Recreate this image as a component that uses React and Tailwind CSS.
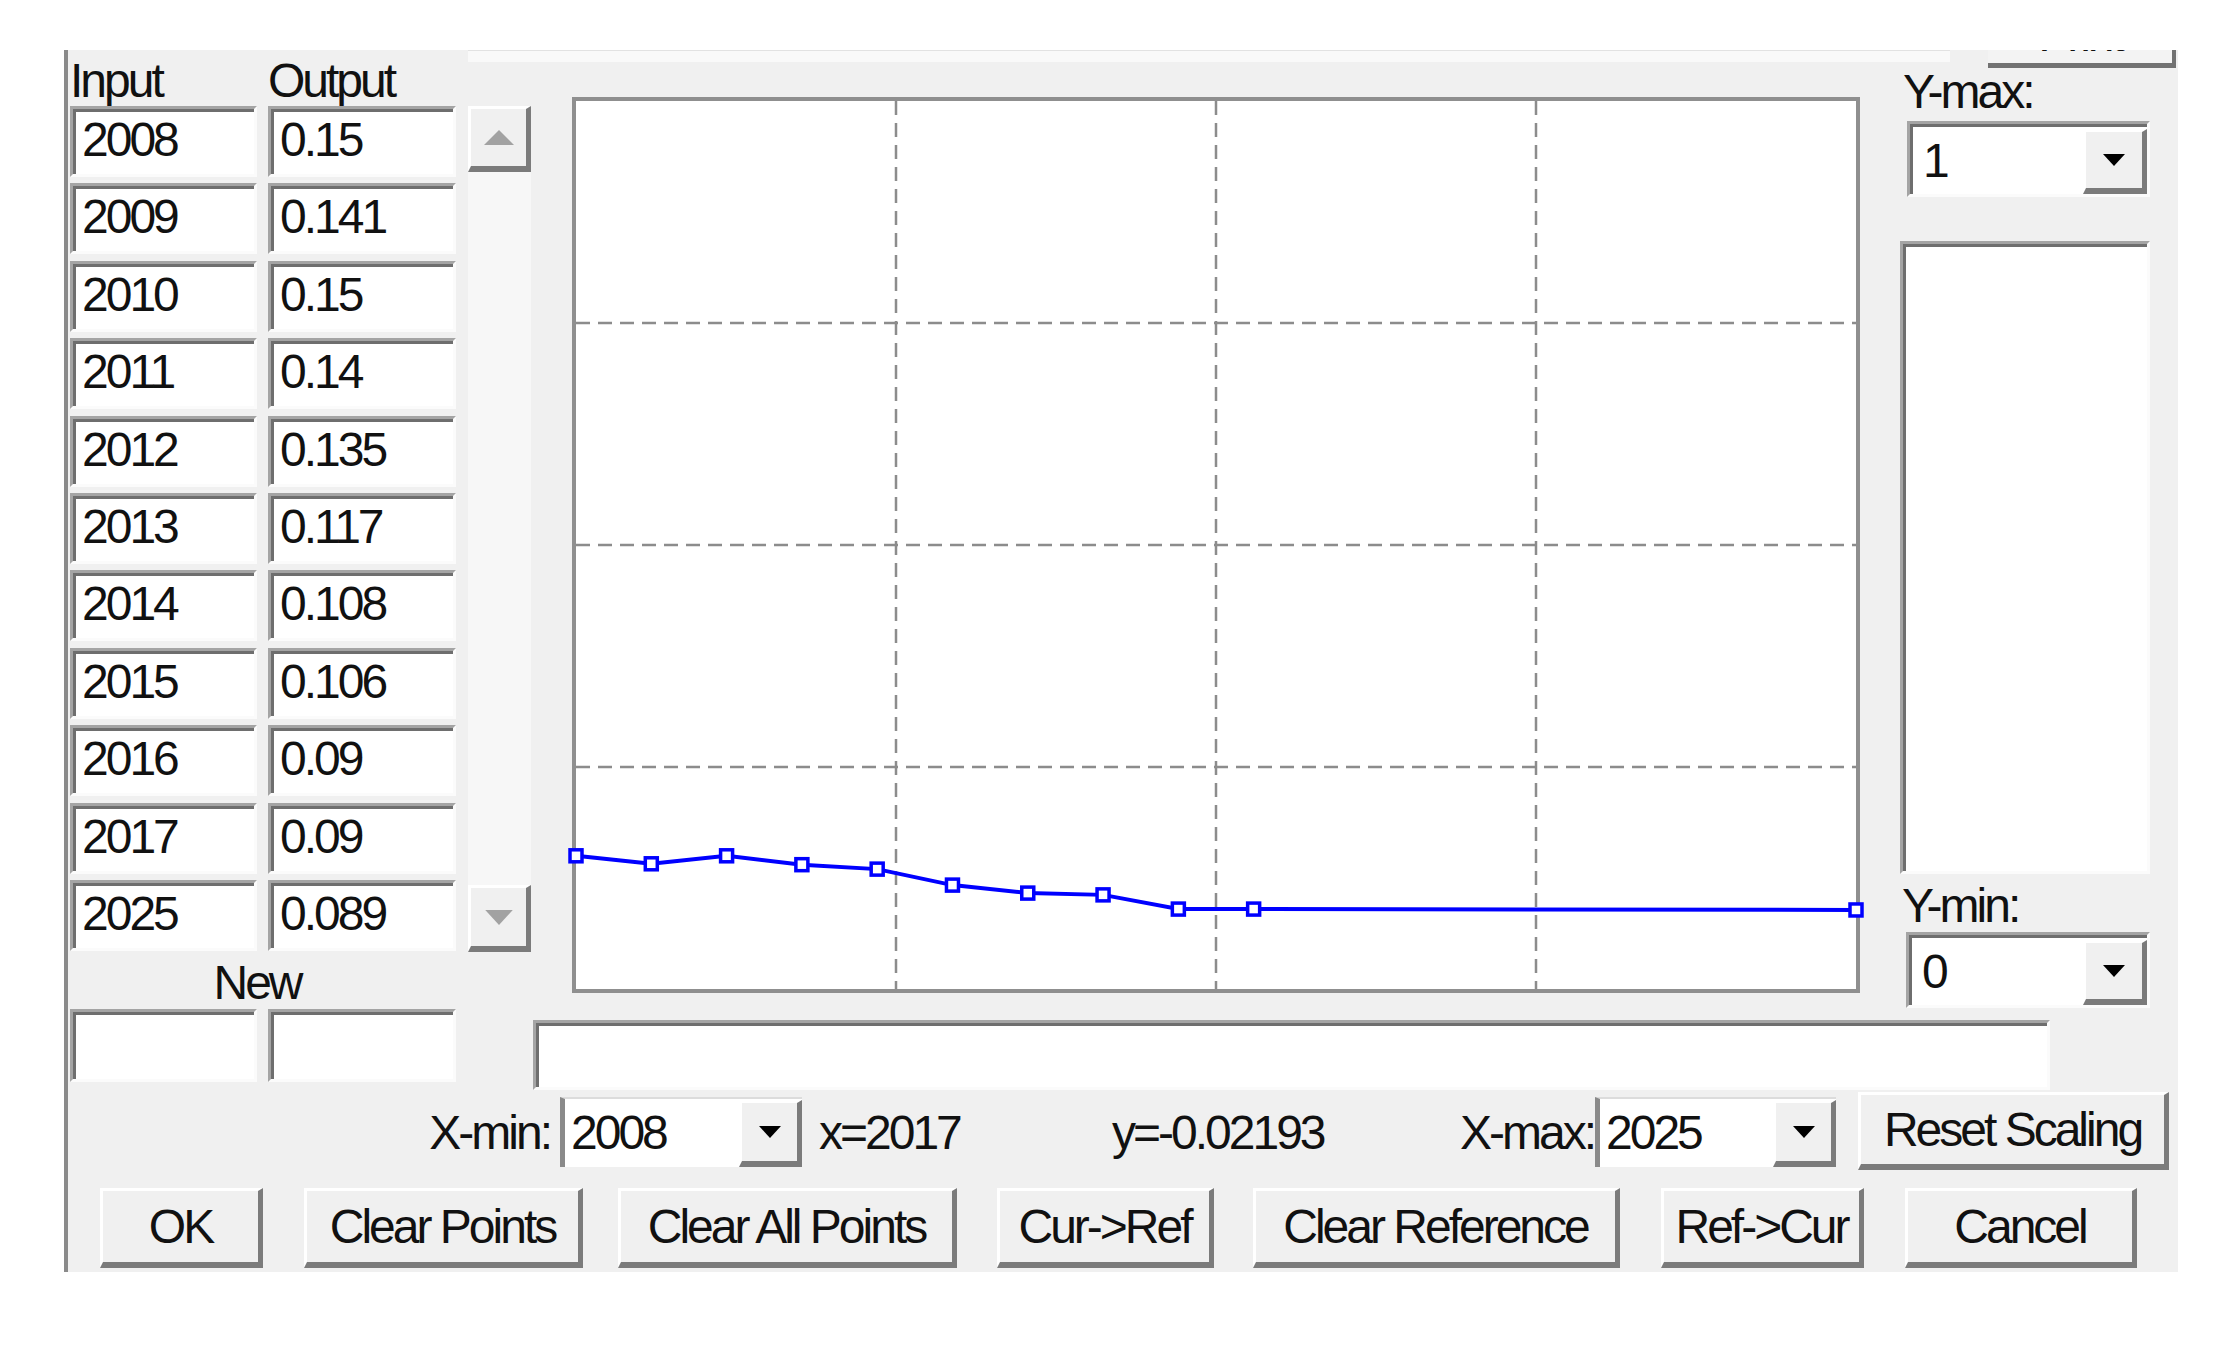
const txt = "font-['Liberation_Sans',Arial,sans-serif] text-[48px] leading-none tracking-[-3px] text-[#111] whitespace-nowrap"

const rows = [
  ['2008', '0.15'],
  ['2009', '0.141'],
  ['2010', '0.15'],
  ['2011', '0.14'],
  ['2012', '0.135'],
  ['2013', '0.117'],
  ['2014', '0.108'],
  ['2015', '0.106'],
  ['2016', '0.09'],
  ['2017', '0.09'],
  ['2025', '0.089'],
]

function Sunken({ className = '', children }) {
  return (
    <div className={`border-t-[3px] border-l-[3px] border-b-[3px] border-r-[3px] border-t-[#a4a4a4] border-l-[#a4a4a4] border-b-[#fbfbfb] border-r-[#fbfbfb] ${className}`}>
      <div className="h-full w-full border-t-[3px] border-l-[3px] border-[#6e6e6e] bg-white">{children}</div>
    </div>
  )
}

function Raised({ className = '', children }) {
  return (
    <div className={`flex items-center justify-center border-t-[3px] border-l-[3px] border-b-[6px] border-r-[5px] border-t-white border-l-white border-b-[#7b7b7b] border-r-[#7b7b7b] bg-[#f0f0f0] ${className}`}>
      {children}
    </div>
  )
}

function DownTri({ color = '#000', w = 22, h = 12 }) {
  return (
    <svg width={w} height={h} viewBox="0 0 22 12" className="block">
      <polygon points="0,0 22,0 11,12" fill={color} />
    </svg>
  )
}

function UpTri() {
  return (
    <svg width="30" height="15" viewBox="0 0 30 15" className="block">
      <polygon points="0,15 30,15 15,0" fill="#a2a2a2" />
    </svg>
  )
}

function Combo({ value, className = '' }) {
  return (
    <div className={`flex border-l-[5px] border-t-[2px] border-l-[#8a8a8a] border-t-[#dcdcdc] bg-white ${className}`}>
      <div className={`flex flex-1 items-center pl-[6px] ${txt}`}>{value}</div>
      <Raised className="mt-[1px] w-[63px]">
        <DownTri />
      </Raised>
    </div>
  )
}

function BoxCombo({ value, className = '' }) {
  return (
    <Sunken className={className}>
      <div className="flex h-full">
        <div className={`flex flex-1 items-center pl-[10px] ${txt}`}>{value}</div>
        <Raised className="mt-[2px] w-[64px]">
          <DownTri />
        </Raised>
      </div>
    </Sunken>
  )
}

function Chart() {
  const W = 1280
  const H = 888
  const pts = rows.map(([x, y]) => [((Number(x) - 2008) / 17) * W, H - Number(y) * H])
  const line = pts.map((p) => p.join(',')).join(' ')
  return (
    <div className="ml-[41px] mt-[29px] h-[896px] w-[1288px] border-[4px] border-[#8f8f8f] bg-white">
      <svg width={W} height={H} className="block overflow-visible">
        {[1, 2, 3].map((i) => (
          <line key={'v' + i} x1={(W / 4) * i} y1="0" x2={(W / 4) * i} y2={H} stroke="#8c8c8c" strokeWidth="2.5" strokeDasharray="14 8" />
        ))}
        {[1, 2, 3].map((i) => (
          <line key={'h' + i} x1="0" y1={(H / 4) * i} x2={W} y2={(H / 4) * i} stroke="#8c8c8c" strokeWidth="2.5" strokeDasharray="14 8" />
        ))}
        <polyline points={line} fill="none" stroke="#0000ff" strokeWidth="4" />
        {pts.map(([x, y], i) => (
          <rect key={i} x={x - 6} y={y - 6} width="12" height="12" fill="#fff" stroke="#0000ff" strokeWidth="3.5" />
        ))}
      </svg>
    </div>
  )
}

function LeftColumn() {
  return (
    <div className="ml-[2px] flex w-[386px] flex-col">
      <div className={`mt-[7px] flex h-[48px] ${txt}`}>
        <div className="w-[198px]">Input</div>
        <div>Output</div>
      </div>
      <div className="mt-[1px] flex flex-col gap-[6.4px]">
        {rows.map(([a, b]) => (
          <div key={a} className="flex gap-[11px]">
            <Sunken className="h-[71px] w-[187px]">
              <div className={`pl-[6px] pt-[4px] ${txt}`}>{a}</div>
            </Sunken>
            <Sunken className="h-[71px] w-[188px]">
              <div className={`pl-[6px] pt-[4px] ${txt}`}>{b}</div>
            </Sunken>
          </div>
        ))}
      </div>
      <div className={`mt-[8px] h-[48px] pr-[12px] text-center ${txt}`}>New</div>
      <div className="mt-[2px] flex gap-[11px]">
        <Sunken className="h-[73px] w-[187px]" />
        <Sunken className="h-[73px] w-[188px]" />
      </div>
    </div>
  )
}

function RightPanel() {
  return (
    <div className="ml-[40px] flex w-[250px] flex-col">
      <div className={`pl-[3px] leading-[44px] ${txt}`}>Y-max:</div>
      <BoxCombo value="1" className="ml-[7px] mt-[5px] h-[76px] w-[243px]" />
      <Sunken className="mt-[44px] h-[633px] w-[250px]" />
      <div className={`mt-[8px] pl-[2px] leading-[44px] ${txt}`}>Y-min:</div>
      <BoxCombo value="0" className="ml-[6px] mt-[2px] h-[76px] w-[244px]" />
    </div>
  )
}

const buttons = [
  ['OK', 'w-[163px] ml-[32px]'],
  ['Clear Points', 'w-[279px] ml-[41px]'],
  ['Clear All Points', 'w-[339px] ml-[35px]'],
  ['Cur->Ref', 'w-[217px] ml-[40px]'],
  ['Clear Reference', 'w-[367px] ml-[39px]'],
  ['Ref->Cur', 'w-[203px] ml-[41px]'],
  ['Cancel', 'w-[232px] ml-[41px]'],
]

export default function App() {
  return (
    <div className="h-[1346px] w-[2233px] bg-white pl-[64px] pt-[50px]">
      <div className="flex h-[1222px] w-[2114px] flex-col border-l-[4px] border-[#8a8a8a] bg-[#f0f0f0]">
        <div className="flex h-[1040px]">
          <LeftColumn />
          <div className="ml-[12px] flex flex-col">
            <div className="flex h-[18px] items-start">
              <div className="h-[12px] w-[1482px] border-t border-[#e2e2e2] bg-[#f9f9f9]" />
              <div className="ml-[38px] h-[18px] w-[188px] overflow-hidden border-b-[5px] border-r-[4px] border-[#727272] bg-[#f3f3f3] text-center">
                <div className={`mt-[-39px] ${txt}`}>Print</div>
              </div>
            </div>
            <div className="flex h-[932px] items-start">
              <div className="mt-[38px] flex w-[63px] flex-col">
                <Raised className="h-[66px]">
                  <UpTri />
                </Raised>
                <div className="h-[713px] bg-[#f7f7f7]" />
                <Raised className="h-[67px]">
                  <DownTri color="#a2a2a2" w={30} h={15} />
                </Raised>
              </div>
              <Chart />
              <RightPanel />
            </div>
            <Sunken className="ml-[65px] mt-[20px] h-[70px] w-[1517px]" />
          </div>
        </div>

        <div className={`flex h-[80px] items-start ${txt}`}>
          <div className="mt-[19px] w-[492px] pr-[10px] text-right">X-min:</div>
          <Combo value="2008" className="mt-[7px] h-[70px] w-[242px]" />
          <div className="ml-[17px] mt-[19px] w-[293px]">x=2017</div>
          <div className="mt-[19px] w-[348px]">y=-0.02193</div>
          <div className="mt-[19px] w-[135px] pr-[6px] text-right">X-max:</div>
          <Combo value="2025" className="mt-[7px] h-[70px] w-[241px]" />
          <Raised className="ml-[22px] mt-[2px] h-[78px] w-[311px]">Reset Scaling</Raised>
        </div>

        <div className={`mt-[18px] flex h-[80px] ${txt}`}>
          {buttons.map(([label, cls]) => (
            <Raised key={label} className={`h-[80px] ${cls}`}>
              {label}
            </Raised>
          ))}
        </div>
      </div>
    </div>
  )
}
